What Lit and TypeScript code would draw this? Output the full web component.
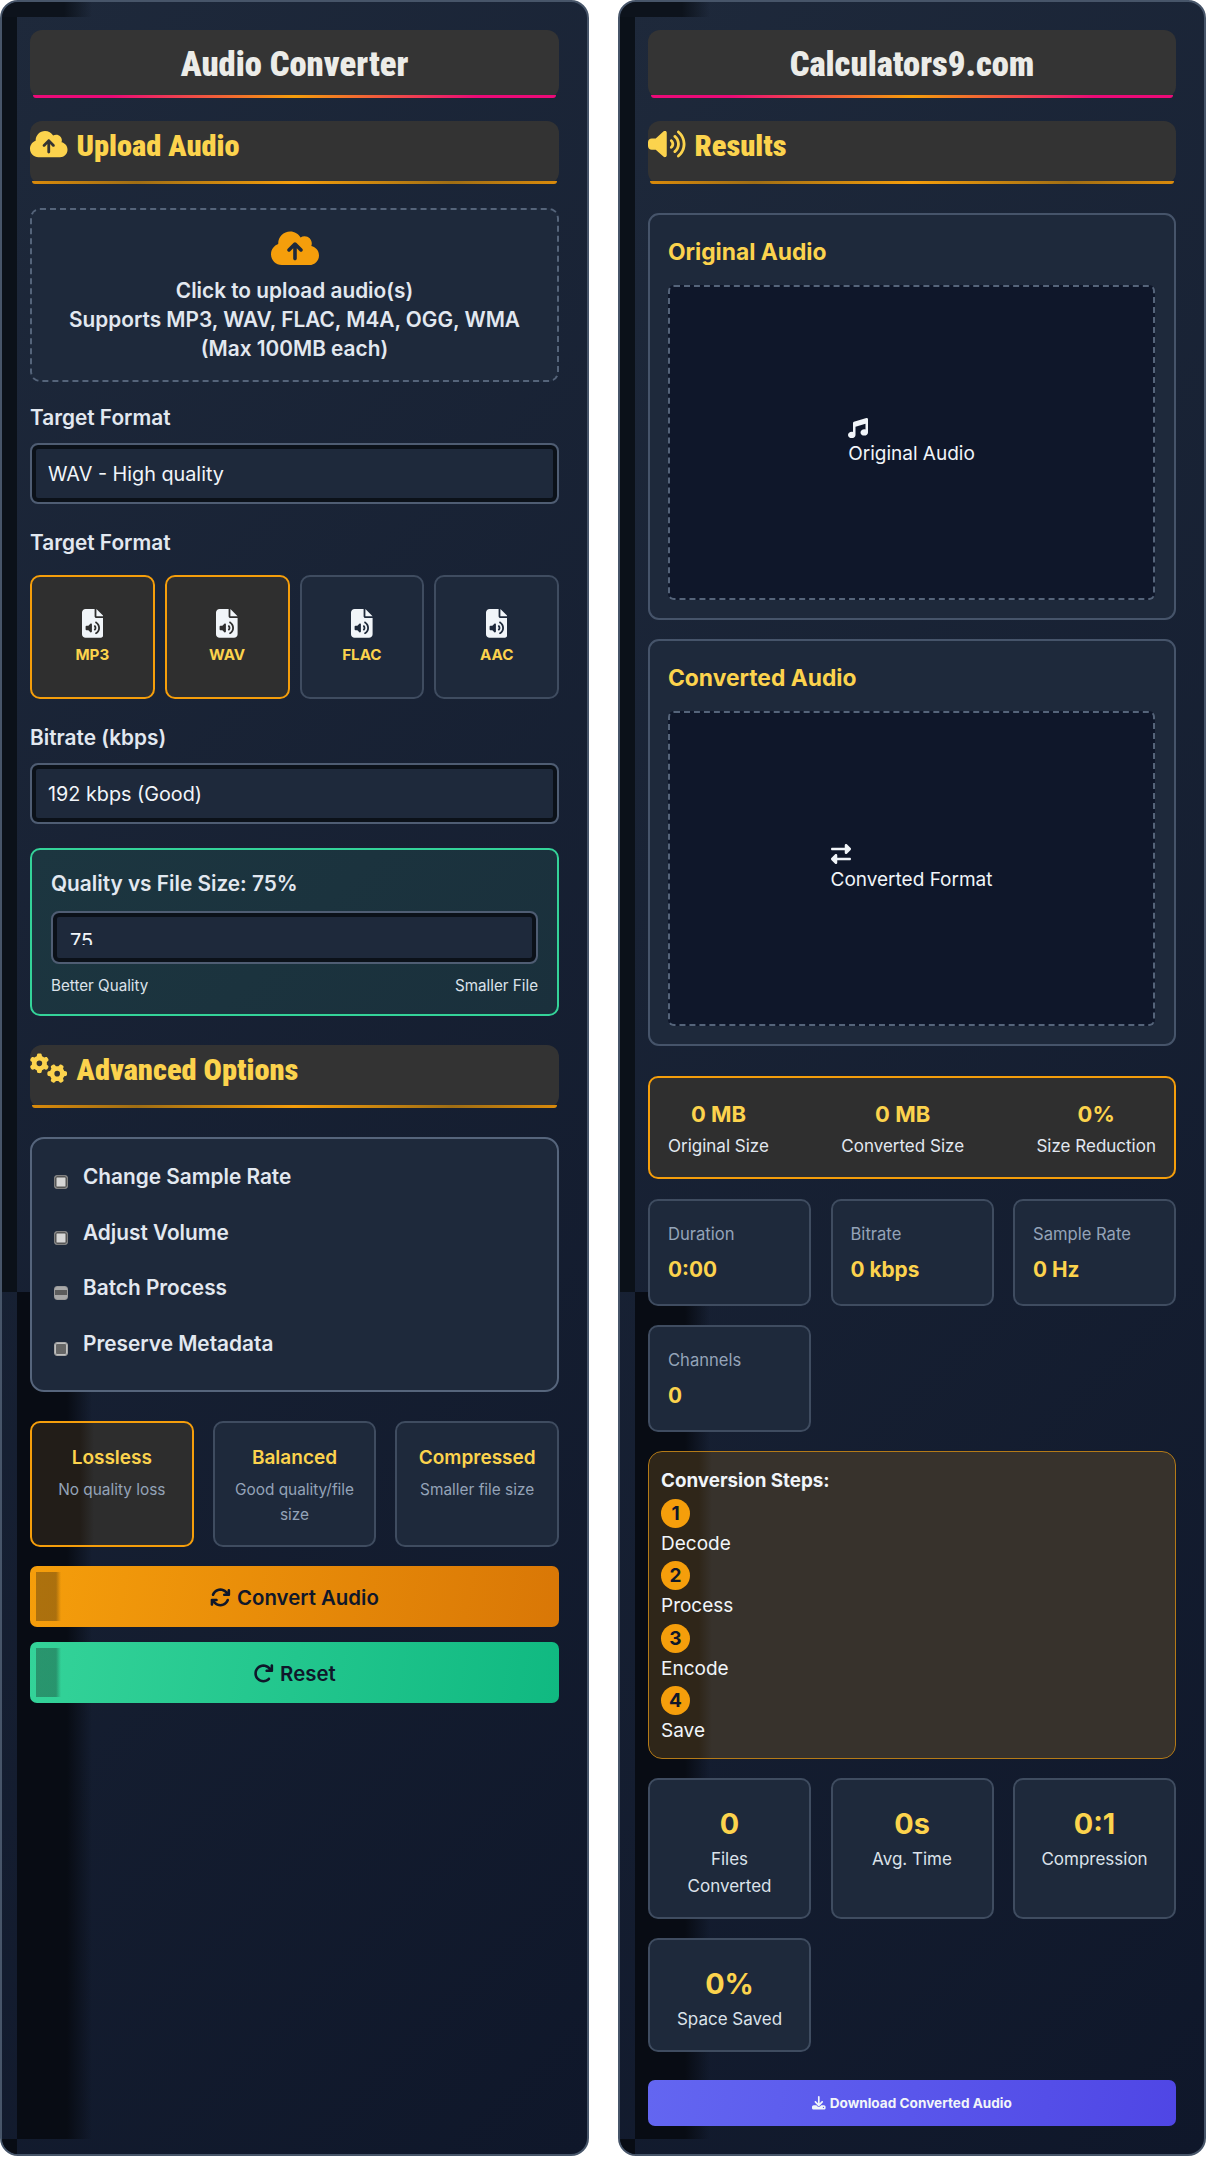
import { LitElement, html, css, svg } from "lit";
import { customElement } from "lit/decorators.js";

const ICONS: Record<string, [string, string]> = {
  cloud: ["0 0 640 512", "M144 480C64.5 480 0 415.5 0 336c0-62.8 40.2-116.2 96.2-135.9c-.1-2.7-.2-5.4-.2-8.1c0-88.4 71.6-160 160-160c59.3 0 111 32.2 138.7 80.2C409.9 102 428.3 96 448 96c53 0 96 43 96 96c0 12.2-2.3 23.8-6.4 34.6C596 238.4 640 290.1 640 352c0 70.7-57.3 128-128 128H144zm79-217c-9.4 9.4-9.4 24.6 0 33.9s24.6 9.4 33.9 0l39-39V392c0 13.3 10.7 24 24 24s24-10.7 24-24V257.9l39 39c9.4 9.4 24.6 9.4 33.9 0s9.4-24.6 0-33.9l-80-80c-9.4-9.4-24.6-9.4-33.9 0l-80 80z"],
  file: ["0 0 384 512", "M64 0C28.7 0 0 28.7 0 64V448c0 35.3 28.7 64 64 64H320c35.3 0 64-28.7 64-64V160H256c-17.7 0-32-14.3-32-32V0H64zM256 0V128H384L256 0zm2 226.3c37.1 22.4 62 63.1 62 109.7s-24.9 87.3-62 109.7c-7.6 4.6-17.4 2.1-22-5.4s-2.1-17.4 5.4-22C269.4 401.5 288 370.9 288 336s-18.6-65.5-46.5-82.3c-7.6-4.6-10-14.4-5.4-22s14.4-10 22-5.4zm-91.9 30.9c6 2.5 9.9 8.3 9.9 14.8V400c0 6.5-3.9 12.3-9.9 14.8s-12.9 1.1-17.4-3.5L113.4 376H80c-8.8 0-16-7.2-16-16V312c0-8.8 7.2-16 16-16h33.4l35.3-35.3c4.6-4.6 11.5-5.9 17.4-3.5zm51 34.9c6.6-5.9 16.7-5.3 22.6 1.3C249.8 304.6 256 319.6 256 336s-6.2 31.4-16.3 42.7c-5.9 6.6-16 7.1-22.6 1.3s-7.1-16-1.3-22.6c5.1-5.7 8.1-13.1 8.1-21.3s-3.1-15.7-8.1-21.3c-5.9-6.6-5.3-16.7 1.3-22.6z"],
  volume: ["0 0 640 512", "M533.6 32.5C598.5 85.2 640 165.8 640 256s-41.5 170.7-106.4 223.5c-10.3 8.4-25.4 6.8-33.8-3.5s-6.8-25.4 3.5-33.8C557.5 398.2 592 331.2 592 256s-34.5-142.2-88.7-186.3c-10.3-8.4-11.8-23.5-3.5-33.8s23.5-11.8 33.8-3.5zM473.1 107c43.2 35.2 70.9 88.9 70.9 149s-27.7 113.8-70.9 149c-10.3 8.4-25.4 6.8-33.8-3.5s-6.8-25.4 3.5-33.8C475.3 341.3 496 301.1 496 256s-20.7-85.3-53.2-111.8c-10.3-8.4-11.8-23.5-3.5-33.8s23.5-11.8 33.8-3.5zm-60.5 74.5C434.1 199.1 448 225.9 448 256s-13.9 56.9-35.4 74.5c-10.3 8.4-25.4 6.8-33.8-3.5s-6.8-25.4 3.5-33.8C393.1 284.4 400 271 400 256s-6.9-28.4-17.7-37.3c-10.3-8.4-11.8-23.5-3.5-33.8s23.5-11.8 33.8-3.5zM301.1 34.8C312.6 40 320 51.4 320 64V448c0 12.6-7.4 24-18.9 29.2s-25 3.1-34.4-5.3L131.8 352H64c-35.3 0-64-28.7-64-64V224c0-35.3 28.7-64 64-64h67.8L266.7 40.1c9.4-8.4 22.9-10.4 34.4-5.3z"],
  gears: ["0 0 640 512", "M308.5 135.3c7.1-6.3 9.9-16.2 6.2-25c-2.3-5.3-4.8-10.5-7.6-15.5L304 89.4c-3-5-6.3-9.9-9.8-14.6c-5.7-7.6-15.7-10.1-24.7-7.1l-28.2 9.3c-10.7-8.8-23-16-36.2-20.9L199 27.1c-1.9-9.3-9.1-16.7-18.5-17.8C173.9 8.4 167.2 8 160.4 8h-.7c-6.8 0-13.5 .4-20.1 1.2c-9.4 1.1-16.6 8.6-18.5 17.8L115 56.1c-13.3 5-25.5 12.1-36.2 20.9L50.5 67.8c-9-3-19-.5-24.7 7.1c-3.5 4.7-6.8 9.6-9.9 14.6l-3 5.3c-2.8 5-5.3 10.2-7.6 15.6c-3.7 8.7-.9 18.6 6.2 25l22.2 19.8C32.6 161.9 32 168.9 32 176s.6 14.1 1.7 20.9L11.5 216.7c-7.1 6.3-9.9 16.2-6.2 25c2.3 5.3 4.8 10.5 7.6 15.6l3 5.2c3 5.1 6.3 9.9 9.9 14.6c5.7 7.6 15.7 10.1 24.7 7.1l28.2-9.3c10.7 8.8 23 16 36.2 20.9l6.1 29.1c1.9 9.3 9.1 16.7 18.5 17.8c6.7 .8 13.5 1.2 20.4 1.2s13.7-.4 20.4-1.2c9.4-1.1 16.6-8.6 18.5-17.8l6.1-29.1c13.3-5 25.5-12.1 36.2-20.9l28.2 9.3c9 3 19 .5 24.7-7.1c3.5-4.7 6.8-9.5 9.8-14.6l3.1-5.4c2.8-5 5.3-10.2 7.6-15.5c3.7-8.7 .9-18.6-6.2-25l-22.2-19.8c1.1-6.8 1.7-13.8 1.7-20.9s-.6-14.1-1.7-20.9l22.2-19.8zM112 176a48 48 0 1 1 96 0 48 48 0 1 1 -96 0zM504.7 500.5c6.3 7.1 16.2 9.9 25 6.2c5.3-2.3 10.5-4.8 15.5-7.6l5.4-3.1c5-3 9.9-6.3 14.6-9.8c7.6-5.7 10.1-15.7 7.1-24.7l-9.3-28.2c8.8-10.7 16-23 20.9-36.2l29.1-6.1c9.3-1.9 16.7-9.1 17.8-18.5c.8-6.7 1.2-13.5 1.2-20.4s-.4-13.7-1.2-20.4c-1.1-9.4-8.6-16.6-17.8-18.5L583.9 307c-5-13.3-12.1-25.5-20.9-36.2l9.3-28.2c3-9 .5-19-7.1-24.7c-4.7-3.5-9.6-6.8-14.6-9.9l-5.3-3c-5-2.8-10.2-5.3-15.6-7.6c-8.7-3.7-18.6-.9-25 6.2l-19.8 22.2c-6.8-1.1-13.8-1.7-20.9-1.7s-14.1 .6-20.9 1.7l-19.8-22.2c-6.3-7.1-16.2-9.9-25-6.2c-5.3 2.3-10.5 4.8-15.6 7.6l-5.2 3c-5.1 3-9.9 6.3-14.6 9.9c-7.6 5.7-10.1 15.7-7.1 24.7l9.3 28.2c-8.8 10.7-16 23-20.9 36.2L315.1 313c-9.3 1.9-16.7 9.1-17.8 18.5c-.8 6.7-1.2 13.5-1.2 20.4s.4 13.7 1.2 20.4c1.1 9.4 8.6 16.6 17.8 18.5l29.1 6.1c5 13.3 12.1 25.5 20.9 36.2l-9.3 28.2c-3 9-.5 19 7.1 24.7c4.7 3.5 9.5 6.8 14.6 9.8l5.4 3.1c5 2.8 10.2 5.3 15.5 7.6c8.7 3.7 18.6 .9 25-6.2l19.8-22.2c6.8 1.1 13.8 1.7 20.9 1.7s14.1-.6 20.9-1.7l19.8 22.2zM464 304a48 48 0 1 1 0 96 48 48 0 1 1 0-96z"],
  sync: ["0 0 512 512", "M105.1 202.6c7.7-21.8 20.2-42.3 37.8-59.8c62.5-62.5 163.8-62.5 226.3 0L386.3 160H352c-17.7 0-32 14.3-32 32s14.3 32 32 32H463.5c0 0 0 0 0 0h.4c17.7 0 32-14.3 32-32V80c0-17.7-14.3-32-32-32s-32 14.3-32 32v35.2L414.4 97.6c-87.5-87.5-229.3-87.5-316.8 0C73.2 122 55.6 150.7 44.8 181.4c-5.9 16.7 2.9 34.9 19.5 40.8s34.9-2.9 40.8-19.5zM39 289.3c-5 1.5-9.8 4.2-13.7 8.2c-4 4-6.7 8.8-8.1 14c-.3 1.2-.6 2.5-.8 3.8c-.3 1.7-.4 3.4-.4 5.1V432c0 17.7 14.3 32 32 32s32-14.3 32-32V396.9l17.6 17.5 0 0c87.5 87.4 229.3 87.4 316.7 0c24.4-24.4 42.1-53.1 52.9-83.7c5.9-16.7-2.9-34.9-19.5-40.8s-34.9 2.9-40.8 19.5c-7.7 21.8-20.2 42.3-37.8 59.8c-62.5 62.5-163.8 62.5-226.3 0l-.1-.1L125.6 352H160c17.7 0 32-14.3 32-32s-14.3-32-32-32H48.4c-1.6 0-3.2 .1-4.8 .3s-3.1 .5-4.6 1z"],
  redo: ["0 0 512 512", "M386.3 160H336c-17.7 0-32 14.3-32 32s14.3 32 32 32H464c17.7 0 32-14.3 32-32V64c0-17.7-14.3-32-32-32s-32 14.3-32 32v51.2L414.4 97.6c-87.5-87.5-229.3-87.5-316.8 0s-87.5 229.3 0 316.8s229.3 87.5 316.8 0c12.5-12.5 12.5-32.8 0-45.3s-32.8-12.5-45.3 0c-62.5 62.5-163.8 62.5-226.3 0s-62.5-163.8 0-226.3s163.8-62.5 226.3 0L386.3 160z"],
  music: ["0 0 512 512", "M499.1 6.3c8.1 6 12.9 15.6 12.9 25.7v72V368c0 44.2-43 80-96 80s-96-35.8-96-80s43-80 96-80c11.2 0 22 1.6 32 4.6V147L192 223.8V432c0 44.2-43 80-96 80s-96-35.8-96-80s43-80 96-80c11.2 0 22 1.6 32 4.6V200 128c0-14.1 9.3-26.6 22.8-30.7l320-96c9.7-2.9 20.2-1.1 28.3 4.9z"],
  exchange: ["0 0 512 512", "M32 96l320 0V32c0-12.9 7.8-24.6 19.8-29.6s25.7-2.2 34.9 6.9l96 96c6 6 9.4 14.1 9.4 22.6s-3.4 16.6-9.4 22.6l-96 96c-9.2 9.2-22.9 11.9-34.9 6.9s-19.8-16.6-19.8-29.6V160L32 160c-17.7 0-32-14.3-32-32s14.3-32 32-32zM480 352c17.7 0 32 14.3 32 32s-14.3 32-32 32H160v64c0 12.9-7.8 24.6-19.8 29.6s-25.7 2.2-34.9-6.9l-96-96c-6-6-9.4-14.1-9.4-22.6s3.4-16.6 9.4-22.6l96-96c9.2-9.2 22.9-11.9 34.9-6.9s19.8 16.6 19.8 29.6l0 64H480z"],
  download: ["0 0 512 512", "M288 32c0-17.7-14.3-32-32-32s-32 14.3-32 32V274.7l-73.4-73.4c-12.5-12.5-32.8-12.5-45.3 0s-12.5 32.8 0 45.3l128 128c12.5 12.5 32.8 12.5 45.3 0l128-128c12.5-12.5 12.5-32.8 0-45.3s-32.8-12.5-45.3 0L288 274.7V32zM64 352c-35.3 0-64 28.7-64 64v32c0 35.3 28.7 64 64 64H448c35.3 0 64-28.7 64-64V416c0-35.3-28.7-64-64-64H346.5l-45.3 45.3c-25 25-65.5 25-90.5 0L165.5 352H64zm368 56a24 24 0 1 1 0 48 24 24 0 1 1 0-48z"],
};

function icon(name: string, h: number) {
  const [vb, d] = ICONS[name];
  const w = (+vb.split(" ")[2] / 512) * h;
  return html`<svg class="ic" viewBox=${vb} width=${w} height=${h} fill="currentColor">${svg`<path d=${d}></path>`}</svg>`;
}

@customElement("app-root")
export class AppRoot extends LitElement {
  static styles = css`
    :host { display: block; width: 1206px; font-family: Inter, "Liberation Sans", sans-serif; color: #e2e8f0; background: #fff; }
    * { box-sizing: border-box; }
    .ic { display: block; flex: none; }
    .page { display: grid; grid-template-columns: 589px 588px; column-gap: 29px; align-items: stretch; }
    .panel { position: relative; overflow: hidden; border: 2px solid #475569; border-radius: 18px; background: linear-gradient(135deg, #1e293b 0%, #0f172a 100%); padding: 28px; display: flex; flex-direction: column; }
    .content { position: relative; z-index: 1; display: flex; flex-direction: column; }
    .shade { position: absolute; z-index: 0; pointer-events: none; }
    .shade.strip { left: 0; top: 15px; width: 15px; height: 1275px; background: #0b1119; }
    .shade.top { left: 0; top: 0; width: 90px; height: 15px; background: linear-gradient(90deg, #0d131c 0, #0d131c 62px, transparent 90px); }
    .shade.low { left: 15px; top: 1290px; bottom: 15px; width: 75px; background: linear-gradient(90deg, #080c14 0, #080c14 50px, transparent 75px); }
    .shade.foot { left: 0; bottom: 0; width: 15px; height: 15px; background: #080c14; }

    .title { position: relative; height: 68px; border-radius: 12px; background: #343434; display: flex; align-items: center; justify-content: center; }
    .title h1 { margin: 0; font: 900 34.6px/1 "Roboto Condensed", Roboto, sans-serif; font-stretch: 75%; color: #ecece8; }
    .bar { position: absolute; left: 3px; right: 3px; bottom: 0; height: 3px; border-radius: 0 0 6px 6px; }
    .title .bar { background: linear-gradient(90deg, #ec0a78 0%, #ec0a78 15%, #f59e0b 50%, #ec0a78 85%, #ec0a78 100%); }
    .sec { position: relative; height: 63px; border-radius: 12px; background: #333; margin-top: 23px; display: flex; align-items: flex-start; gap: 9px; padding-top: 8px; color: #fcd34d; }
    .sec .bar { left: 2px; right: 2px; background: linear-gradient(90deg, #d98a0b, #a06e14 20%, #f59e0b 50%, #a06e14 80%, #d98a0b); }
    .sec h2 { margin: 0; font: 900 30.4px/33px "Roboto Condensed", Roboto, sans-serif; font-stretch: 75%; color: #fcd34d; }

    .upload { margin-top: 24px; height: 174px; border: 2px dashed #55647a; border-radius: 10px; background: #1e293b; display: flex; flex-direction: column; align-items: center; padding-top: 19px; text-align: center; font-size: 20.8px; font-weight: 600; line-height: 29px; color: #e2e8f0; }
    .upload .ic { color: #f59e0b; margin-bottom: 9px; }

    .label { font-size: 20.8px; font-weight: 600; line-height: 28px; color: #e2e8f0; }
    .select { height: 61px; border: 2px solid #4f5d73; border-radius: 8px; background: #1e293b; box-shadow: inset 0 0 0 4px #0b1119; display: flex; align-items: center; padding-left: 16px; font-size: 19.8px; color: #f1f5f9; }
    .grid4 { display: grid; grid-template-columns: repeat(4, 1fr); gap: 10px; margin-top: 18px; }
    .fmt { height: 124px; border: 2px solid #3f4c60; border-radius: 10px; background: #1e293b; display: flex; flex-direction: column; align-items: center; padding-top: 32px; color: #f1f5f9; font-size: 15.2px; font-weight: 700; }
    .fmt.on { border-color: #f59e0b; background: #2f2f2f; }
    .fmt span { color: #fcd34d; margin-top: 7px; line-height: 20px; }
    .quality { margin-top: 24px; height: 168px; border: 2px solid #34d399; border-radius: 10px; background: linear-gradient(135deg, #1c3640, #1a303c); padding: 19px 19px 0; }
    .quality .label { line-height: 30px; }
    .num { margin-top: 12px; height: 53px; border: 2px solid #4f5d73; border-radius: 8px; background: #1e293b; box-shadow: inset 0 0 0 4px #0b1119; padding: 0 17px; overflow: hidden; font-size: 20px; color: #f1f5f9; }
    .num div { height: 28px; margin-top: 4px; overflow: hidden; padding-top: 10px; line-height: 28px; }
    .hints { display: flex; justify-content: space-between; margin-top: 11px; font-size: 15.2px; line-height: 22px; color: #dbe2ea; }
    .options { margin-top: 29px; height: 255px; border: 2px solid #56657c; border-radius: 14px; background: #1e293b; padding: 23px 0 0 22px; display: flex; flex-direction: column; }
    .opt { display: flex; align-items: flex-start; gap: 15px; height: 55.5px; font-size: 20.8px; font-weight: 600; line-height: 30px; color: #e2e8f0; }
    .check { width: 14px; height: 14px; margin-top: 13px; border: 1.5px solid #808080; border-radius: 3px; background: #d6d6d6; box-shadow: inset 0 0 0 1.5px #555; flex: none; }
    .check.band { border-color: #9a9a9a; background: linear-gradient(#a8a8a8 0 3px, #5c5c5c 3px 8px, #a8a8a8 8px); box-shadow: none; }
    .check.dim { border-color: #a8a8a8; background: #666; box-shadow: inset 0 0 0 1px #c0c0c0; }
    .grid3 { display: grid; grid-template-columns: repeat(3, 1fr); column-gap: 19px; }
    .preset { height: 126px; border: 2px solid #3f4c60; border-radius: 10px; background: #1e293b; text-align: center; padding: 21px 8px 0; }
    .preset.on { border-color: #f59e0b; background: linear-gradient(90deg, #221d18 0, #221d18 48px, #2d2d2d 62px); }
    .preset b { display: block; color: #fcd34d; font-size: 19px; font-weight: 600; line-height: 28px; }
    .preset p { margin: 6px 0 0; color: #94a3b8; font-size: 15.4px; line-height: 24.5px; }
    .btn { position: relative; height: 61px; padding-top: 2px; border-radius: 7px; display: flex; align-items: center; justify-content: center; gap: 6px; font-size: 20.4px; font-weight: 600; color: #0f172a; overflow: hidden; }
    .btn::before { content: ""; position: absolute; left: 6px; top: 6px; bottom: 6px; width: 25px; background: linear-gradient(90deg, rgba(20,20,20,.32) 0 20px, transparent 25px); }
    .btn.orange { background: linear-gradient(100deg, #f59e0b, #d97706); margin-top: 19px; }
    .btn.green { background: linear-gradient(100deg, #34d399, #10b981); margin-top: 15px; }

    .card { border: 2px solid #46546a; border-radius: 11px; background: #1e293b; padding: 20px 19px 19px 18px; margin-top: 29px; }
    .card h3 { margin: 0; font-size: 22.8px; font-weight: 700; line-height: 34px; color: #fcd34d; }
    .preview { margin-top: 16px; height: 315px; border: 2px dashed #55647a; border-radius: 6px; background: #0f172a; display: flex; align-items: center; justify-content: center; font-size: 19px; line-height: 27px; color: #f1f5f9; }
    .preview .ic { margin-bottom: 2px; }
    .sum { margin-top: 30px; height: 103px; padding: 2px 18px 0; border: 2px solid #f59e0b; border-radius: 10px; background: #2f2f2f; display: flex; justify-content: space-between; align-items: center; text-align: center; }
    .sum b { display: block; color: #fcd34d; font-size: 22px; font-weight: 700; line-height: 33px; }
    .sum span { display: block; margin-top: 2px; font-size: 17px; line-height: 26px; color: #e2e8f0; }
    .stats { margin-top: 20px; row-gap: 19px; column-gap: 19.5px; }
    .stat { height: 107px; border: 2px solid #3f4c60; border-radius: 10px; background: #1e293b; padding: 19px 18px 0; }
    .stat span { display: block; color: #94a3b8; font-size: 16.6px; line-height: 28px; }
    .stat b { display: block; margin-top: 8px; color: #fcd34d; font-size: 20.8px; font-weight: 700; line-height: 28px; }
    .steps { margin-top: 19px; height: 308px; border: 1.5px solid #b47a17; border-radius: 14px; background: linear-gradient(90deg, #2f2619 0, #2f2619 50px, #37322c 63px); padding: 15px 12px 0; font-size: 19px; line-height: 27px; color: #f1f5f9; }
    .steps strong { display: block; font-weight: 700; font-size: 18.8px; line-height: 28px; }
    .step { height: 62.4px; }
    .steps .first { margin-top: 4px; }
    .dot { width: 29px; height: 29px; border-radius: 50%; background: #f59e0b; color: #0f172a; display: flex; align-items: center; justify-content: center; font-weight: 700; font-size: 19px; }
    .step span { display: block; margin-top: 2px; line-height: 28px; }
    .mini { margin-top: 19px; row-gap: 19px; column-gap: 19.5px; }
    .m { border: 2px solid #3f4c60; border-radius: 10px; background: #1e293b; text-align: center; height: 141px; padding: 25px 19px 0; }
    .m.short { height: 114px; }
    .m b { display: block; color: #fcd34d; font-size: 28.8px; font-weight: 700; line-height: 38px; }
    .m span { display: block; margin: 3px -12px 0; font-size: 17px; line-height: 27px; color: #dbe2ea; }
    .m span.wrap { margin: 3px 0 0; }
    .dl { margin-top: 28px; height: 46px; border-radius: 7px; background: linear-gradient(100deg, #6366f1, #4f46e5); display: flex; align-items: center; justify-content: center; gap: 4px; color: #f1f5f9; font-size: 13.6px; font-weight: 700; }
  `;

  private shades() {
    return html`<div class="shade top"></div><div class="shade strip"></div><div class="shade low"></div><div class="shade foot"></div>`;
  }

  render() {
    return html`<div class="page">
      <section class="panel">
        ${this.shades()}
        <div class="content">
          <div class="title"><h1>Audio Converter</h1><i class="bar"></i></div>
          <div class="sec">${icon("cloud", 30)}<h2>Upload Audio</h2><i class="bar"></i></div>
          <div class="upload">${icon("cloud", 38.4)}<div>Click to upload audio(s)<br />Supports MP3, WAV, FLAC, M4A, OGG, WMA<br />(Max 100MB each)</div></div>
          <div class="label" style="margin-top:22px">Target Format</div>
          <div class="select" style="margin-top:11px">WAV - High quality</div>
          <div class="label" style="margin-top:25px">Target Format</div>
          <div class="grid4">
            ${[["MP3", 1], ["WAV", 1], ["FLAC", 0], ["AAC", 0]].map(([n, on]) => html`<div class="fmt ${on ? "on" : ""}">${icon("file", 28.8)}<span>${n}</span></div>`)}
          </div>
          <div class="label" style="margin-top:25px">Bitrate (kbps)</div>
          <div class="select" style="margin-top:11px">192 kbps (Good)</div>
          <div class="quality">
            <div class="label">Quality vs File Size: 75%</div>
            <div class="num"><div>75</div></div>
            <div class="hints"><span>Better Quality</span><span>Smaller File</span></div>
          </div>
          <div class="sec" style="margin-top:29px">${icon("gears", 30)}<h2>Advanced Options</h2><i class="bar"></i></div>
          <div class="options">
            <div class="opt"><i class="check"></i>Change Sample Rate</div>
            <div class="opt"><i class="check"></i>Adjust Volume</div>
            <div class="opt"><i class="check band"></i>Batch Process</div>
            <div class="opt"><i class="check dim"></i>Preserve Metadata</div>
          </div>
          <div class="grid3" style="margin-top:29px">
            <div class="preset on"><b>Lossless</b><p>No quality loss</p></div>
            <div class="preset"><b>Balanced</b><p>Good quality/file size</p></div>
            <div class="preset"><b>Compressed</b><p>Smaller file size</p></div>
          </div>
          <div class="btn orange">${icon("sync", 20.8)}Convert Audio</div>
          <div class="btn green">${icon("redo", 20.8)}Reset</div>
        </div>
      </section>
      <section class="panel">
        ${this.shades()}
        <div class="content">
          <div class="title"><h1>Calculators9.com</h1><i class="bar"></i></div>
          <div class="sec">${icon("volume", 30)}<h2>Results</h2><i class="bar"></i></div>
          <div class="card" style="height:407px"><h3>Original Audio</h3>
            <div class="preview"><div>${icon("music", 20)}Original Audio</div></div></div>
          <div class="card" style="height:407px;margin-top:19px"><h3>Converted Audio</h3>
            <div class="preview"><div>${icon("exchange", 20)}Converted Format</div></div></div>
          <div class="sum">
            <div><b>0 MB</b><span>Original Size</span></div>
            <div><b>0 MB</b><span>Converted Size</span></div>
            <div><b>0%</b><span>Size Reduction</span></div>
          </div>
          <div class="grid3 stats">
            <div class="stat"><span>Duration</span><b>0:00</b></div>
            <div class="stat"><span>Bitrate</span><b>0 kbps</b></div>
            <div class="stat"><span>Sample Rate</span><b>0 Hz</b></div>
            <div class="stat"><span>Channels</span><b>0</b></div>
          </div>
          <div class="steps">
            <strong>Conversion Steps:</strong>
            ${["Decode", "Process", "Encode", "Save"].map((s, i) => html`<div class="step ${i === 0 ? "first" : ""}"><div class="dot">${i + 1}</div><span>${s}</span></div>`)}
          </div>
          <div class="grid3 mini">
            <div class="m"><b>0</b><span class="wrap">Files Converted</span></div>
            <div class="m"><b>0s</b><span>Avg. Time</span></div>
            <div class="m"><b>0:1</b><span>Compression</span></div>
            <div class="m short"><b>0%</b><span>Space Saved</span></div>
          </div>
          <div class="dl">${icon("download", 13.6)}Download Converted Audio</div>
        </div>
      </section>
    </div>`;
  }
}
